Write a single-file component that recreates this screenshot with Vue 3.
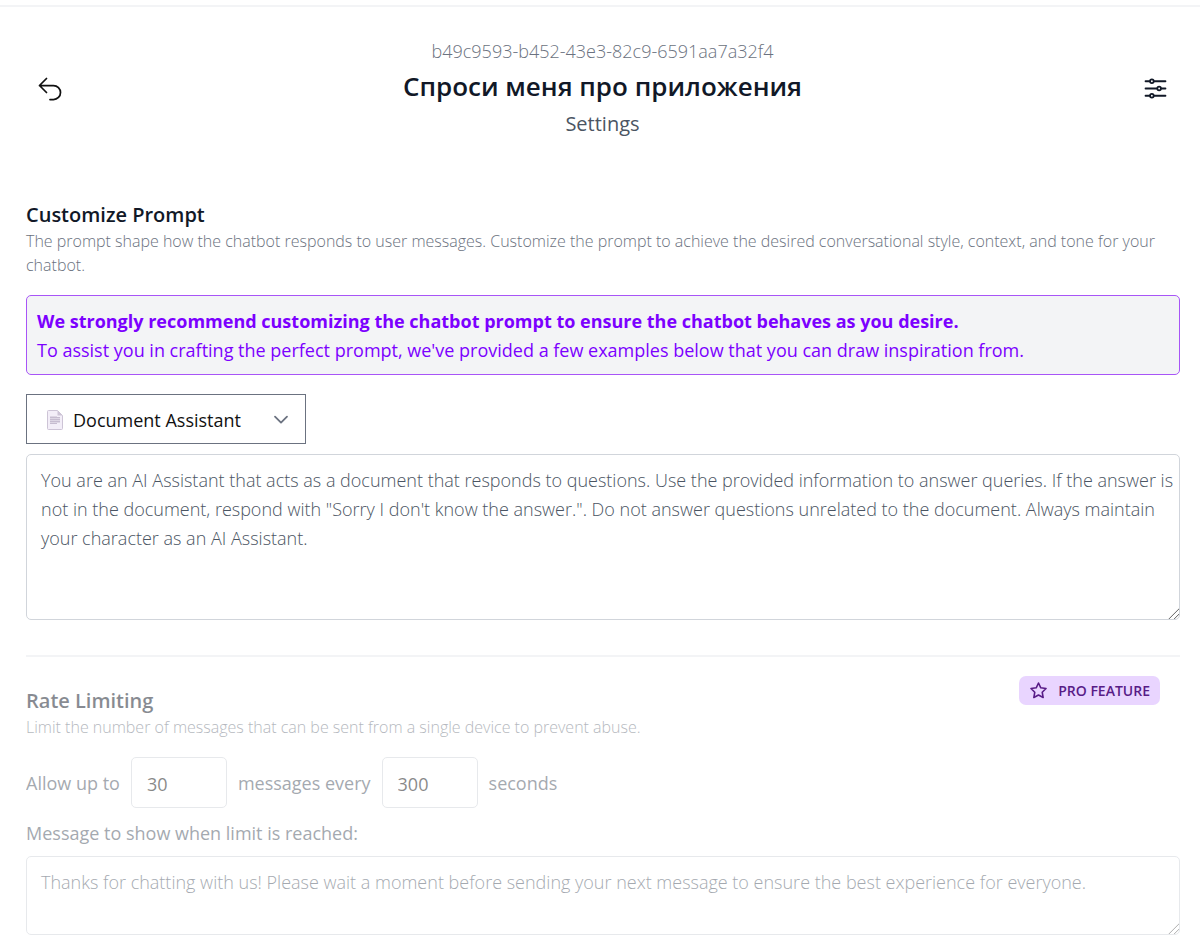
<template>
  <div class="page">
    <header class="header">
      <a class="icon-link" href="#" aria-label="Back">
        <svg width="28" height="28" viewBox="0 0 24 24" fill="none" stroke="#111" stroke-width="1.5" stroke-linecap="round" stroke-linejoin="round">
          <path d="M9 15 3 9m0 0 6-6M3 9h12a6 6 0 0 1 0 12h-3" />
        </svg>
      </a>
      <div class="heading">
        <p class="bot-id">{{ botId }}</p>
        <h1>Спроси меня про приложения</h1>
        <p class="subtitle">Settings</p>
      </div>
      <button class="icon-link" type="button" aria-label="Options">
        <svg width="29" height="29" viewBox="0 0 24 24" fill="none" stroke="#111827" stroke-width="1.5" stroke-linecap="round" stroke-linejoin="round">
          <path d="M10.5 6h9.75M10.5 6a1.5 1.5 0 1 1-3 0m3 0a1.5 1.5 0 1 0-3 0M3.75 6H7.5m3 12h9.75m-9.75 0a1.5 1.5 0 0 1-3 0m3 0a1.5 1.5 0 0 0-3 0m-3.75 0H7.5m9-6h3.75m-3.75 0a1.5 1.5 0 0 1-3 0m3 0a1.5 1.5 0 0 0-3 0m-9.75 0h9.75" />
        </svg>
      </button>
    </header>

    <section class="prompt">
      <h2 id="prompt-title">Customize Prompt</h2>
      <p class="hint">The prompt shape how the chatbot responds to user messages. Customize the prompt to achieve the desired conversational style, context, and tone for your chatbot.</p>
      <div class="notice">
        <strong>We strongly recommend customizing the chatbot prompt to ensure the chatbot behaves as you desire.</strong>
        <p>To assist you in crafting the perfect prompt, we've provided a few examples below that you can draw inspiration from.</p>
      </div>
      <div class="template-select">
        <select v-model="template" aria-label="Prompt template">
          <option v-for="t in templates" :key="t" :value="t">{{ t }}</option>
        </select>
        <svg class="doc" width="16" height="20" viewBox="0 0 16 20">
          <path d="M1.5.5h9l5 5v13a1 1 0 0 1-1 1h-13a1 1 0 0 1-1-1v-17a1 1 0 0 1 1-1Z" fill="#f3eef8" stroke="#cdc4d6" />
          <path d="M10.5.5v5h5Z" fill="#cdc4d6" />
          <path d="M3 6h7v1h3v6h-3v1H3Z" fill="#ddd6e4" />
          <path d="M3 7.5h10M3 9.5h10M3 11.5h10M3 13.5h7" stroke="#c6bcd0" />
        </svg>
        <svg class="chevron" width="24" height="24" viewBox="0 0 20 20" fill="none" stroke="#6b7280" stroke-width="1.5" stroke-linecap="round" stroke-linejoin="round">
          <path d="m5 8 5 5 5-5" />
        </svg>
      </div>
      <textarea v-model="prompt" class="prompt-text" aria-labelledby="prompt-title"></textarea>
    </section>

    <section class="rate">
      <span class="badge">
        <svg width="19" height="19" viewBox="0 0 24 24" fill="none" stroke="currentColor" stroke-width="2" stroke-linejoin="round">
          <path d="m12 2.5 2.900 6.100 6.600.9-4.800 4.700 1.200 6.700-5.900-3.200-5.900 3.200 1.200-6.700L2.500 9.500l6.600-.9Z" />
        </svg>
        PRO FEATURE
      </span>
      <div class="faded">
        <h2>Rate Limiting</h2>
        <p class="hint">Limit the number of messages that can be sent from a single device to prevent abuse.</p>
        <div class="limits">
          <label for="limit-count">Allow up to</label>
          <input id="limit-count" v-model="count" type="text" inputmode="numeric">
          <label for="limit-period">messages every</label>
          <input id="limit-period" v-model="period" type="text" inputmode="numeric">
          <span>seconds</span>
        </div>
        <label class="message-label" for="limit-message">Message to show when limit is reached:</label>
        <textarea id="limit-message" v-model="message" class="message-text"></textarea>
      </div>
    </section>
  </div>
</template>

<script setup>
import { ref } from 'vue'

const botId = 'b49c9593-b452-43e3-82c9-6591aa7a32f4'
const templates = ['Document Assistant']

const template = ref(templates[0])
const prompt = ref('You are an AI Assistant that acts as a document that responds to questions. Use the provided information to answer queries. If the answer is not in the document, respond with "Sorry I don\'t know the answer.". Do not answer questions unrelated to the document. Always maintain your character as an AI Assistant.')
const count = ref('30')
const period = ref('300')
const message = ref('Thanks for chatting with us! Please wait a moment before sending your next message to ensure the best experience for everyone.')
</script>

<style>
body {
  background: #fff;
}
</style>

<style scoped>
* {
  box-sizing: border-box;
}

.page {
  margin-top: 5px;
  border-top: 2px solid #f3f4f6;
  padding: 30px 20px 8px 26px;
  font-family: "Open Sans", "Noto Sans", sans-serif;
  font-size: 18px;
  line-height: 29px;
  color: #4b5563;
}

h1,
h2,
p {
  margin: 0;
}

.header {
  display: flex;
  align-items: center;
  justify-content: space-between;
  padding: 0 10px;
}

.icon-link {
  display: flex;
  padding: 0 0 2px;
  border: 0;
  background: none;
  cursor: pointer;
}

.heading {
  text-align: center;
}

.bot-id {
  font-weight: 300;
  color: #6b7280;
}

h1 {
  font-size: 26px;
  line-height: 40px;
  font-weight: 600;
  color: #111827;
}

.subtitle {
  font-size: 20px;
  line-height: 36px;
}

.prompt {
  margin-top: 59px;
  padding-bottom: 35px;
  border-bottom: 2px solid #f3f4f6;
}

h2 {
  font-size: 20px;
  line-height: 28px;
  font-weight: 600;
  color: #111827;
}

.hint {
  font-size: 16px;
  line-height: 24px;
  font-weight: 300;
  color: #6b7280;
}

.notice {
  margin-top: 18px;
  padding: 11px 10px 9px;
  border: 1px solid #a855f7;
  border-radius: 5px;
  background: #f3f4f6;
  color: #7c00ff;
}

.notice strong {
  display: block;
  font-weight: 700;
}

.template-select {
  position: relative;
  width: 280px;
  margin-top: 19px;
}

select {
  display: block;
  width: 100%;
  height: 50px;
  padding: 2px 48px 0 46px;
  border: 1px solid #6b7280;
  border-radius: 0;
  appearance: none;
  background: #fff;
  color: #111;
  font: inherit;
}

.doc,
.chevron {
  position: absolute;
  top: 50%;
  transform: translateY(-50%);
  pointer-events: none;
}

.doc {
  left: 21px;
  margin-top: 1px;
}

.chevron {
  right: 13px;
}

textarea,
input {
  display: block;
  border: 1px solid #d1d5db;
  border-radius: 5px;
  background: #fff;
  font: inherit;
}

textarea {
  width: 100%;
  padding: 11px 2px 11px 14px;
  font-weight: 300;
  color: #4b5563;
}

textarea::-webkit-resizer {
  background: linear-gradient(135deg, transparent 63%, #777 65%, #777 68%, transparent 70%, transparent 80%, #777 82%, #777 85%, transparent 87%);
}

.prompt-text {
  height: 166px;
  margin-top: 10px;
}

.rate {
  position: relative;
  padding-top: 30px;
}

.badge {
  position: absolute;
  top: 19px;
  right: 20px;
  display: flex;
  align-items: center;
  gap: 10px;
  height: 29px;
  padding: 0 10px;
  border-radius: 7px;
  background: #e9d5ff;
  color: #581c87;
  font-size: 14px;
  font-weight: 600;
}

.faded {
  opacity: 0.5;
}

.limits {
  display: flex;
  align-items: center;
  gap: 11px;
  margin-top: 18px;
}

.limits label,
.limits span {
  padding-top: 2px;
}

input {
  width: 96px;
  height: 51px;
  padding: 2px 15px 0;
  color: #111;
}

.message-label {
  display: block;
  margin-top: 11px;
}

.message-text {
  height: 79px;
  margin-top: 8px;
}
</style>
